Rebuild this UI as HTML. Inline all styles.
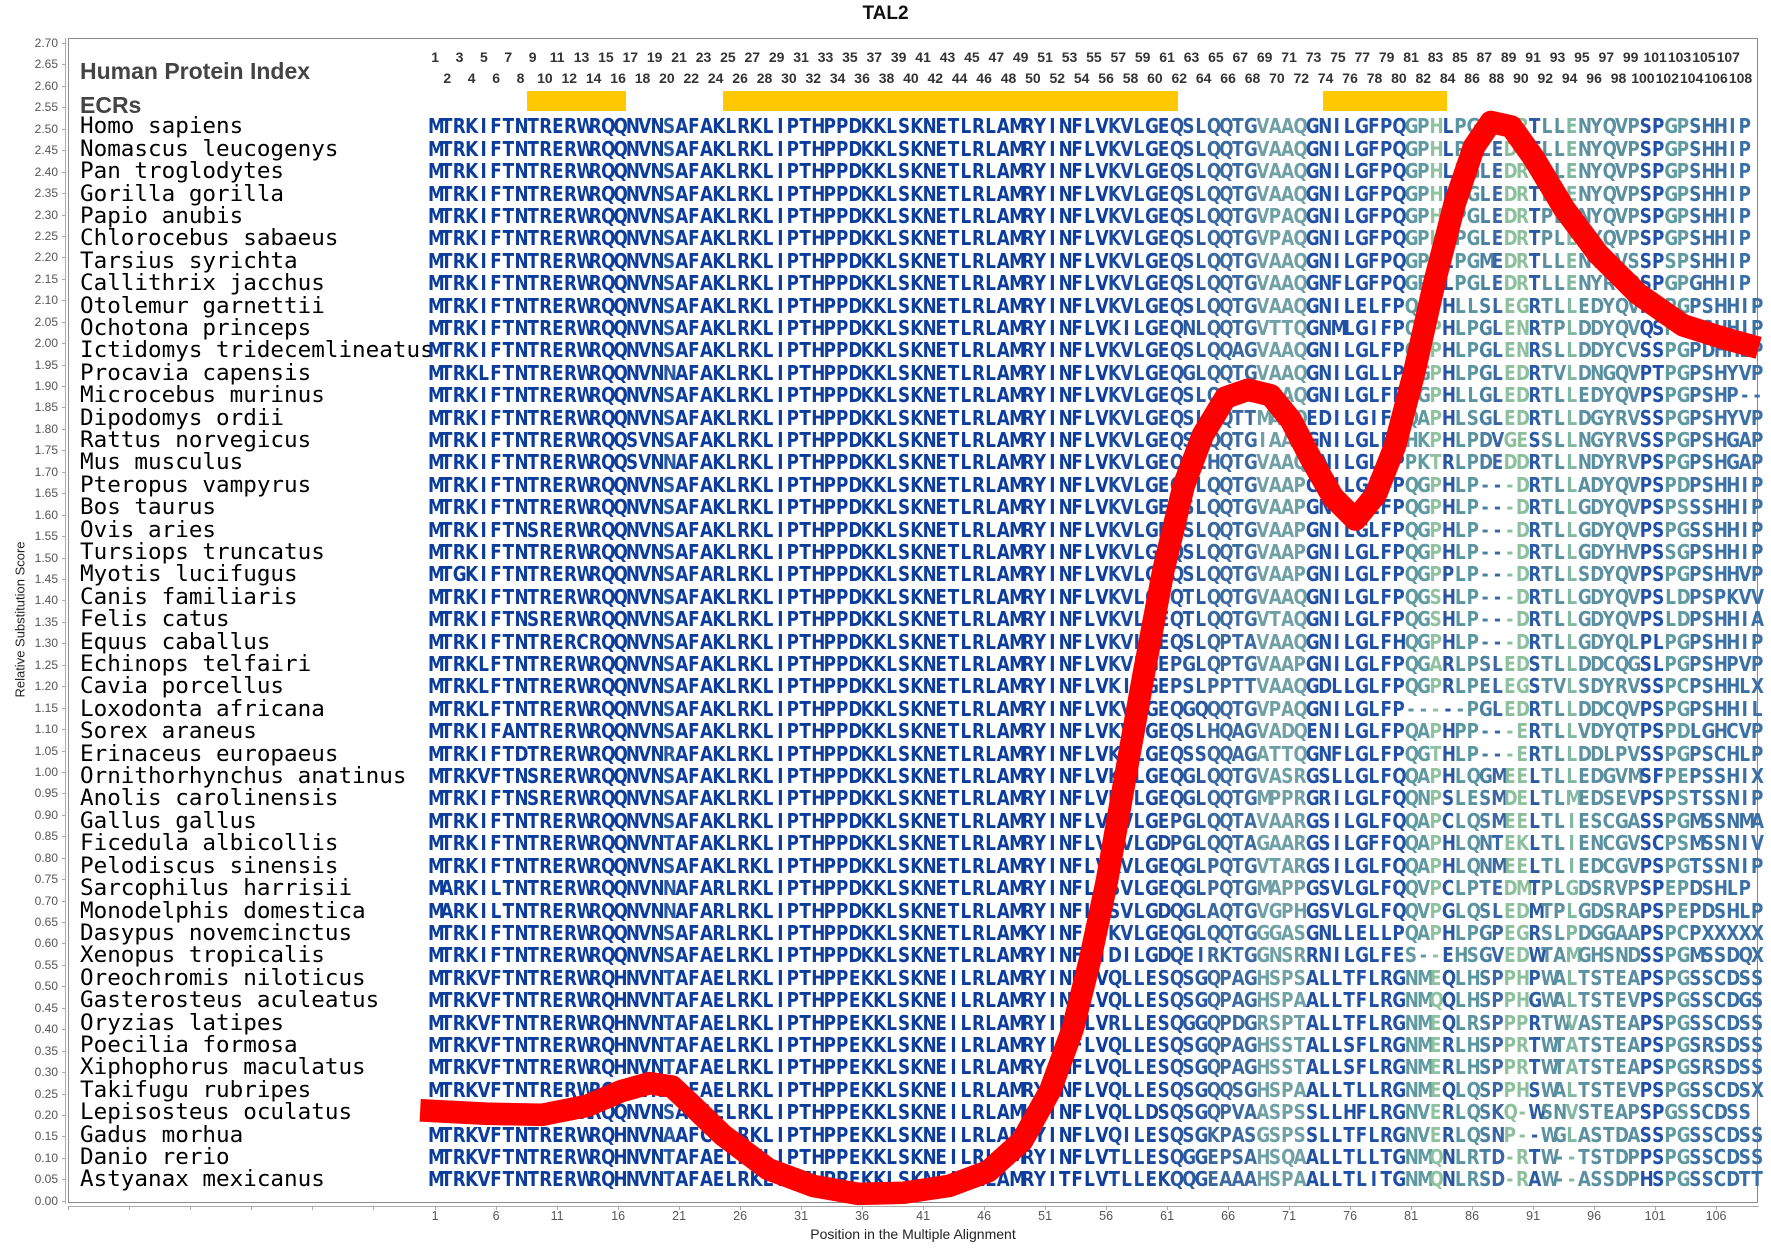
<!DOCTYPE html>
<html><head><meta charset="utf-8">
<style>
html,body{margin:0;padding:0;background:#fff;}
body{width:1771px;height:1250px;position:relative;overflow:hidden;font-family:"Liberation Sans",sans-serif;}
.abs{position:absolute;}
#title{left:0;width:1771px;top:3px;text-align:center;font-weight:bold;font-size:19px;color:#111;}
#box{left:68px;top:38px;width:1690px;height:1165px;border:1px solid #8a8a8a;box-sizing:border-box;}
.hdr{font-weight:bold;font-size:23px;color:#444;left:80px;}
#rows{left:80px;top:115.3px;}
.r{height:22.41px;line-height:22.41px;white-space:nowrap;position:relative;}
.n{font-family:"DejaVu Sans Mono",monospace;font-size:22.6px;color:#000;position:absolute;left:0;top:0;}
.s{position:absolute;left:348px;top:0;font-family:"DejaVu Sans",sans-serif;font-weight:bold;font-size:20.5px;color:#0c3c9c;transform:scaleX(0.82);transform-origin:0 0;}
.s i{font-style:normal;display:inline-block;width:15.085px;text-align:center;}
.num{font-family:"Liberation Sans Narrow","Liberation Sans",sans-serif;font-weight:bold;font-size:14px;color:#333;width:30px;margin-left:-15px;text-align:center;}
.ecr{background:#ffc800;top:91px;height:20px;}
.yl{font-size:12px;color:#555;width:50px;left:8px;text-align:right;font-family:"Liberation Sans Narrow","Liberation Sans",sans-serif;}
.xl{font-size:12.5px;color:#555;width:30px;margin-left:-15px;text-align:center;top:1209px;font-family:"Liberation Sans Narrow","Liberation Sans",sans-serif;}
</style></head><body>
<div id="title" class="abs">TAL2</div>
<div id="box" class="abs"></div>
<div class="abs" style="left:65px;top:38px;width:1px;height:1166px;background:#aaa"></div>
<div class="abs" style="left:68px;top:1206px;width:1691px;height:1px;background:#aaa"></div>
<div class="abs" style="left:-80px;top:612px;width:200px;text-align:center;font-size:13px;color:#222;transform:rotate(-90deg)">Relative Substitution Score</div>
<div class="abs" style="left:0;width:1826px;top:1226px;text-align:center;font-size:14px;color:#222">Position in the Multiple Alignment</div>
<div class="abs hdr" style="top:58px">Human Protein Index</div>
<div class="abs hdr" style="top:92px">ECRs</div>
<div class="abs ecr" style="left:527px;width:99px"></div>
<div class="abs ecr" style="left:723px;width:455px"></div>
<div class="abs ecr" style="left:1323px;width:124px"></div>
<div id="deco"></div>
<div id="rows" class="abs">
<div class="r"><span class="n">Homo sapiens</span><span class="s">MTRKIFTNTRERWRQQNVNSAFAKLRKLIPTHPPDKKLSKNETLRLAMRYINFLVKVLGEQSLQQTGVAAQGNILGFPQGPHLPGLEDRTLLENYQVPSPGPSHHIP</span></div>
<div class="r"><span class="n">Nomascus leucogenys</span><span class="s">MTRKIFTNTRERWRQQNVNSAFAKLRKLIPTHPPDKKLSKNETLRLAMRYINFLVKVLGEQSLQQTGVAAQGNILGFPQGPHLPGLEDRTLLENYQVPSPGPSHHIP</span></div>
<div class="r"><span class="n">Pan troglodytes</span><span class="s">MTRKIFTNTRERWRQQNVNSAFAKLRKLIPTHPPDKKLSKNETLRLAMRYINFLVKVLGEQSLQQTGVAAQGNILGFPQGPHLPGLEDRTLLENYQVPSPGPSHHIP</span></div>
<div class="r"><span class="n">Gorilla gorilla</span><span class="s">MTRKIFTNTRERWRQQNVNSAFAKLRKLIPTHPPDKKLSKNETLRLAMRYINFLVKVLGEQSLQQTGVAAQGNILGFPQGPHLPGLEDRTLLENYQVPSPGPSHHIP</span></div>
<div class="r"><span class="n">Papio anubis</span><span class="s">MTRKIFTNTRERWRQQNVNSAFAKLRKLIPTHPPDKKLSKNETLRLAMRYINFLVKVLGEQSLQQTGVPAQGNILGFPQGPHLPGLEDRTPLENYQVPSPGPSHHIP</span></div>
<div class="r"><span class="n">Chlorocebus sabaeus</span><span class="s">MTRKIFTNTRERWRQQNVNSAFAKLRKLIPTHPPDKKLSKNETLRLAMRYINFLVKVLGEQSLQQTGVPAQGNILGFPQGPHLPGLEDRTPLENYQVPSPGPSHHIP</span></div>
<div class="r"><span class="n">Tarsius syrichta</span><span class="s">MTRKIFTNTRERWRQQNVNSAFAKLRKLIPTHPPDKKLSKNETLRLAMRYINFLVKVLGEQSLQQTGVAAQGNILGFPQGPHLPGMEDRTLLENYQVSSPSPSHHIP</span></div>
<div class="r"><span class="n">Callithrix jacchus</span><span class="s">MTRKIFTNTRERWRQQNVNSAFAKLRKLIPTHPPDKKLSKNETLRLAMRYINFLVKVLGEQSLQQTGVAAQGNFLGFPQGPPLPGLEDRTLLENYRVPSPGPGHHIP</span></div>
<div class="r"><span class="n">Otolemur garnettii</span><span class="s">MTRKIFTNTRERWRQQNVNSAFAKLRKLIPTHPPDKKLSKNETLRLAMRYINFLVKVLGEQSLQQTGVAAQGNILELFPQGPHLLSLEGRTLLEDYQVPSPGPSHHIP</span></div>
<div class="r"><span class="n">Ochotona princeps</span><span class="s">MTRKIFTNTRERWRQQNVNSAFAKLRKLIPTHPPDKKLSKNETLRLAMRYINFLVKILGEQNLQQTGVTTQGNMLGIFPQGPHLPGLENRTPLDDYQVQSPGPSHHIP</span></div>
<div class="r"><span class="n">Ictidomys tridecemlineatus</span><span class="s">MTRKIFTNTRERWRQQNVNSAFAKLRKLIPTHPPDKKLSKNETLRLAMRYINFLVKVLGEQSLQQAGVAAQGNILGLFPQGPHLPGLENRSLLDDYCVSSPGPDHHLP</span></div>
<div class="r"><span class="n">Procavia capensis</span><span class="s">MTRKLFTNTRERWRQQNVNNAFAKLRKLIPTHPPDKKLSKNETLRLAMRYINFLVKVLGEQGLQQTGVAAQGNILGLLPQGPHLPGLEDRTVLDNGQVPTPGPSHYVP</span></div>
<div class="r"><span class="n">Microcebus murinus</span><span class="s">MTRKIFTNTRERWRQQNVNSAFAKLRKLIPTHPPDKKLSKNETLRLAMRYINFLVKVLGEQSLQQAGVAAQGNILGLFPQGPHLLGLEDRTLLEDYQVPSPGPSHP--</span></div>
<div class="r"><span class="n">Dipodomys ordii</span><span class="s">MTRKIFTNTRERWRQQNVNSAFAKLRKLIPTHPPDKKLSKNETLRLAMRYINFLVKVLGEQSLQQTTMAEQEDILGIFPQAPHLSGLEDRTLLDGYRVSSPGPSHYVP</span></div>
<div class="r"><span class="n">Rattus norvegicus</span><span class="s">MTRKIFTNTRERWRQQSVNSAFAKLRKLIPTHPPDKKLSKNETLRLAMRYINFLVKVLGEQSLQQTGIAAQGNILGLFPHKPHLPDVGESSLLNGYRVSSPGPSHGAP</span></div>
<div class="r"><span class="n">Mus musculus</span><span class="s">MTRKIFTNTRERWRQQSVNNAFAKLRKLIPTHPPDKKLSKNETLRLAMRYINFLVKVLGEQSLHQTGVAAQGNILGLFPPKTRLPDEDDRTLLNDYRVPSPGPSHGAP</span></div>
<div class="r"><span class="n">Pteropus vampyrus</span><span class="s">MTRKIFTNTRERWRQQNVNSAFAKLRKLIPTHPPDKKLSKNETLRLAMRYINFLVKVLGEQSLQQTGVAAPGNILGLFPQGPHLP---DRTLLADYQVPSPDPSHHIP</span></div>
<div class="r"><span class="n">Bos taurus</span><span class="s">MTRKIFTNTRERWRQQNVNSAFAKLRKLIPTHPPDKKLSKNETLRLAMRYINFLVKVLGEQSLQQTGVAAPGNILGLFPQGPHLP---DRTLLGDYQVPSPSSSHHIP</span></div>
<div class="r"><span class="n">Ovis aries</span><span class="s">MTRKIFTNSRERWRQQNVNSAFAKLRKLIPTHPPDKKLSKNETLRLAMRYINFLVKVLGEQSLQQTGVAAPGNILGLFPQGPHLP---DRTLLGDYQVPSPGSSHHIP</span></div>
<div class="r"><span class="n">Tursiops truncatus</span><span class="s">MTRKIFTNTRERWRQQNVNSAFAKLRKLIPTHPPDKKLSKNETLRLAMRYINFLVKVLGEQSLQQTGVAAPGNILGLFPQGPHLP---DRTLLGDYHVPSSGPSHHIP</span></div>
<div class="r"><span class="n">Myotis lucifugus</span><span class="s">MTGKIFTNTRERWRQQNVNSAFARLRKLIPTHPPDKKLSKNETLRLAMRYINFLVKVLGEQSLQQTGVAAPGNILGLFPQGPPLP---DRTLLSDYQVPSPGPSHHVP</span></div>
<div class="r"><span class="n">Canis familiaris</span><span class="s">MTRKIFTNTRERWRQQNVNSAFAKLRKLIPTHPPDKKLSKNETLRLAMRYINFLVKVLGEQTLQQTGVAAQGNILGLFPQGSHLP---DRTLLGDYQVPSLDPSPKVV</span></div>
<div class="r"><span class="n">Felis catus</span><span class="s">MTRKIFTNSRERWRQQNVNSAFAKLRKLIPTHPPDKKLSKNETLRLAMRYINFLVKVLGEQTLQQTGVTAQGNILGLFPQGSHLP---DRTLLGDYQVPSLDPSHHIA</span></div>
<div class="r"><span class="n">Equus caballus</span><span class="s">MTRKIFTNTRERCRQQNVNSAFAKLRKLIPTHPPDKKLSKNETLRLAMRYINFLVKVLREQSLQPTAVAAQGNILGLFHQGPHLP---DRTLLGDYQLPLPGPSHHIP</span></div>
<div class="r"><span class="n">Echinops telfairi</span><span class="s">MTRKLFTNTRERWRQQNVNSAFAKLRKLIPTHPPDKKLSKNETLRLAMRYINFLVKVLGEPGLQPTGVAAPGNILGLFPQGARLPSLEDSTLLDDCQGSLPGPSHPVP</span></div>
<div class="r"><span class="n">Cavia porcellus</span><span class="s">MTRKLFTNTRERWRQQNVNSAFAKLRKLIPTHPPDKKLSKNETLRLAMRYINFLVKILGEPSLPPTTVAAQGDLLGLFPQGPRLPELEGSTVLSDYRVSSPCPSHHLX</span></div>
<div class="r"><span class="n">Loxodonta africana</span><span class="s">MTRKLFTNTRERWRQQNVNSAFAKLRKLIPTHPPDKKLSKNETLRLAMRYINFLVKVLGEQGQQQTGVPAQGNILGLFP-----PGLEDRTLLDDCQVPSPGPSHHIL</span></div>
<div class="r"><span class="n">Sorex araneus</span><span class="s">MTRKIFANTRERWRQQNVNSAFAKLRKLIPTHPPDKKLSKNETLRLAMRYINFLVKVLGEQSLHQAGVADQENILGLFPQAPHPP---ERTLLVDYQTPSPDLGHCVP</span></div>
<div class="r"><span class="n">Erinaceus europaeus</span><span class="s">MTRKIFTDTRERWRQQNVNRAFAKLRKLIPTHPPDKKLSKNETLRLAMRYINFLVKVLGEQSSQQAGATTQGNFLGLFPQGTHLP---ERTLLDDLPVSSPGPSCHLP</span></div>
<div class="r"><span class="n">Ornithorhynchus anatinus</span><span class="s">MTRKVFTNSRERWRQQNVNSAFAKLRKLIPTHPPDKKLSKNETLRLAMRYINFLVKVLGEQGLQQTGVASRGSLLGLFQQAPHLQGMEELTLLEDGVMSFPEPSSHIX</span></div>
<div class="r"><span class="n">Anolis carolinensis</span><span class="s">MTRKIFTNSRERWRQQNVNSAFAKLRKLIPTHPPDKKLSKNETLRLAMRYINFLVKVLGEQGLQQTGMPPRGRILGLFQQNPSLESMDELTLMEDSEVPSPSTSSNIP</span></div>
<div class="r"><span class="n">Gallus gallus</span><span class="s">MTRKIFTNTRERWRQQNVNSAFAKLRKLIPTHPPDKKLSKNETLRLAMRYINFLVKVLGEPGLQQTAVAARGSILGLFQQAPCLQSMEELTLIESCGASSPGMSSNMA</span></div>
<div class="r"><span class="n">Ficedula albicollis</span><span class="s">MTRKIFTNTRERWRQQNVNTAFAKLRKLIPTHPPDKKLSKNETLRLAMRYINFLVKVLGDPGLQQTAGAARGSILGFFQQAPHLQNTEKLTLIENCGVSCPSMSSNIV</span></div>
<div class="r"><span class="n">Pelodiscus sinensis</span><span class="s">MTRKIFTNTRERWRQQNVNSAFAKLRKLIPTHPPDKKLSKNETLRLAMRYINFLVKVLGEQGLPQTGVTARGSILGLFQQAPHLQNMEELTLIEDCGVPSPGTSSNIP</span></div>
<div class="r"><span class="n">Sarcophilus harrisii</span><span class="s">MARKILTNTRERWRQQNVNNAFARLRKLIPTHPPDKKLSKNETLRLAMRYINFLASVLGEQGLPQTGMAPPGSVLGLFQQVPCLPTEDMTPLGDSRVPSPEPDSHLP</span></div>
<div class="r"><span class="n">Monodelphis domestica</span><span class="s">MARKILTNTRERWRQQNVNNAFARLRKLIPTHPPDKKLSKNETLRLAMRYINFLVSVLGDQGLAQTGVGPHGSVLGLFQQVPGLQSLEDMTPLGDSRAPSPEPDSHLP</span></div>
<div class="r"><span class="n">Dasypus novemcinctus</span><span class="s">MTRKIFTNTRERWRQQNVNSAFARLRKLIPTHPPDKKLSKNETLRLAMKYINFLVKVLGEQGLQQTGGGASGNLLELLPQAPHLPGPEGRSLPDGGAAPSPCPXXXXX</span></div>
<div class="r"><span class="n">Xenopus tropicalis</span><span class="s">MTRKIFTNTRERWRQQNVNSAFAELRKLIPTHPPDKKLSKNETLRLAMRYINFLIDILGDQEIRKTGGNSRRNILGLFES--EHSGVEDWTAMGHSNDSSPGMSSDQX</span></div>
<div class="r"><span class="n">Oreochromis niloticus</span><span class="s">MTRKVFTNTRERWRQHNVNTAFAELRKLIPTHPPEKKLSKNEILRLAMRYINFLVQLLESQSGQPAGHSPSALLTFLRGNMEQLHSPPHPWALTSTEAPSPGSSCDSS</span></div>
<div class="r"><span class="n">Gasterosteus aculeatus</span><span class="s">MTRKVFTNTRERWRQHNVNTAFAELRKLIPTHPPEKKLSKNEILRLAMRYINFLVQLLESQSGQPAGHSPAALLTFLRGNMQQLHSPPHGWALTSTEVPSPGSSCDGS</span></div>
<div class="r"><span class="n">Oryzias latipes</span><span class="s">MTRKVFTNTRERWRQHNVNTAFAELRKLIPTHPPEKKLSKNEILRLAMRYINFLVRLLESQGGQPDGRSPTALLTFLRGNMEQLRSPPPRTWVASTEAPSPGSSCDSS</span></div>
<div class="r"><span class="n">Poecilia formosa</span><span class="s">MTRKVFTNTRERWRQHNVNTAFAELRKLIPTHPPEKKLSKNEILRLAMRYINFLVQLLESQSGQPAGHSSTALLSFLRGNMERLHSPPRTWTATSTEAPSPGSRSDSS</span></div>
<div class="r"><span class="n">Xiphophorus maculatus</span><span class="s">MTRKVFTNTRERWRQHNVNTAFAELRKLIPTHPPEKKLSKNEILRLAMRYINFLVQLLESQSGQPAGHSSTALLSFLRGNMERLHSPPRTWTATSTEAPSPGSRSDSS</span></div>
<div class="r"><span class="n">Takifugu rubripes</span><span class="s">MTRKVFTNTRERWRQHNVNAAFAELRKLIPTHPPEKKLSKNEILRLAMRYINFLVQLLESQSGQQSGHSPAALLTLLRGNMEQLQSPPHSWALTSTEVPSPGSSCDSX</span></div>
<div class="r"><span class="n">Lepisosteus oculatus</span><span class="s">MTRKVFTNTRERWRQQNVNSAFAELRKLIPTHPPEKKLSKNEILRLAMKYINFLVQLLDSQSGQPVAASPSSLLHFLRGNVERLQSKQ-WSNVSTEAPSPGSSCDSS</span></div>
<div class="r"><span class="n">Gadus morhua</span><span class="s">MTRKVFTNTRERWRQHNVNAAFCELRKLIPTHPPEKKLSKNEILRLAMRYINFLVQILESQSGKPASGSPSSLLTFLRGNVERLQSNP--WGLASTDASSPGSSCDSS</span></div>
<div class="r"><span class="n">Danio rerio</span><span class="s">MTRKVFTNTRERWRQHNVNTAFAELRKLIPTHPPEKKLSKNEILRLAMRYINFLVTLLESQGGEPSAHSQAALLTLLTGNMQNLRTD-RTW--TSTDPPSPGSSCDSS</span></div>
<div class="r"><span class="n">Astyanax mexicanus</span><span class="s">MTRKVFTNTRERWRQHNVNTAFAELRKLIPTHPPEKKLSKNEILRLAMRYITFLVTLLEKQQGEAAAHSPAALLTLITGNMQNLRSD-RAW--ASSDPHSPGSSCDTT</span></div>
</div>
<svg class="abs" style="left:0;top:0" width="1771" height="1250" viewBox="0 0 1771 1250">
<g transform="scale(1.1295)">
<polyline fill="none" stroke="#ff0000" stroke-width="20" stroke-linejoin="round" stroke-linecap="butt"
points="372,983 430,986 480,987 520,979 550,966 575,959 595,962 612,978 640,1005 680,1035 720,1050 760,1057 800,1056 840,1050 875,1037 905,1010 930,965 950,910 965,850 980,780 995,695 1012,600 1030,505 1048,430 1065,385 1085,352 1105,345 1125,350 1143,372 1160,405 1180,440 1200,460 1218,438 1235,395 1252,330 1270,250 1288,180 1305,130 1320,108 1338,112 1358,140 1385,185 1415,225 1450,260 1490,288 1525,299 1557,308"/>
</g>
</svg>
<script>
(function(){
var cw=12.2,x0=429;
var map={61:'#2a55a0',62:'#2a58a0',63:'#2a58a2',64:'#3a6aa0',65:'#3a6aa0',66:'#3a6aa0',67:'#3a6aa0',68:'#6fa0a5',69:'#6fa0a5',70:'#6fa0a5',71:'#6fa0a5',72:'#2050a5',73:'#2050a5',74:'#2050a5',75:'#2050a5',76:'#2050a5',77:'#2050a5',78:'#2050a5',79:'#2050a5',80:'#5e9aa0',81:'#5e9aa0',82:'#8fc3a0',83:'#2855a0',84:'#5a95a0',85:'#5a95a0',86:'#4a80a0',87:'#3a65a5',88:'#8cc09c',89:'#8cc09c',90:'#2a5aa5',91:'#5a90a0',92:'#5a90a0',93:'#80b8a0',94:'#5a90a0',95:'#5a90a0',96:'#5a90a0',97:'#5a90a0',98:'#5a90a0',99:'#2050a8',100:'#2050a8',101:'#5e9aa0',102:'#5e9aa0',103:'#3a70a5',104:'#3a70a5',105:'#3a70a5',106:'#3a70a5',107:'#3a70a5',108:'#3a70a5'};
var ss=document.querySelectorAll('.s');
for(var k=0;k<ss.length;k++){var t=ss[k].textContent,h='';
for(var j=0;j<t.length;j++){var c=j+1,col=map[c]||(c==20?'#2a5aa0':(c>=56?'#1a4aa0':'#0c3c9c'));h+='<i style="color:'+col+'">'+t[j]+'</i>';}
ss[k].innerHTML=h;}
var d='';
for(var n=1;n<=108;n++){var x=x0+(n-0.5)*cw;d+='<div class="abs num" style="left:'+x+'px;top:'+(n%2?49:70)+'px">'+n+'</div>';}
for(var i=0;i<=54;i++){var y=43+i*21.44;d+='<div class="abs yl" style="top:'+(y-7)+'px">'+(2.70-i*0.05).toFixed(2)+'</div><div class="abs" style="left:62px;top:'+y+'px;width:4px;height:1px;background:#aaa"></div>';}
for(var n=1;n<=106;n+=5){var x=x0+(n-0.5)*cw;d+='<div class="abs xl" style="left:'+x+'px">'+n+'</div><div class="abs" style="left:'+x+'px;top:1206px;width:1px;height:4px;background:#aaa"></div>';}
for(var x=68;x<430;x+=61){d+='<div class="abs" style="left:'+x+'px;top:1206px;width:1px;height:4px;background:#aaa"></div>';}
document.getElementById('deco').innerHTML=d;
})();
</script>
</body></html>
